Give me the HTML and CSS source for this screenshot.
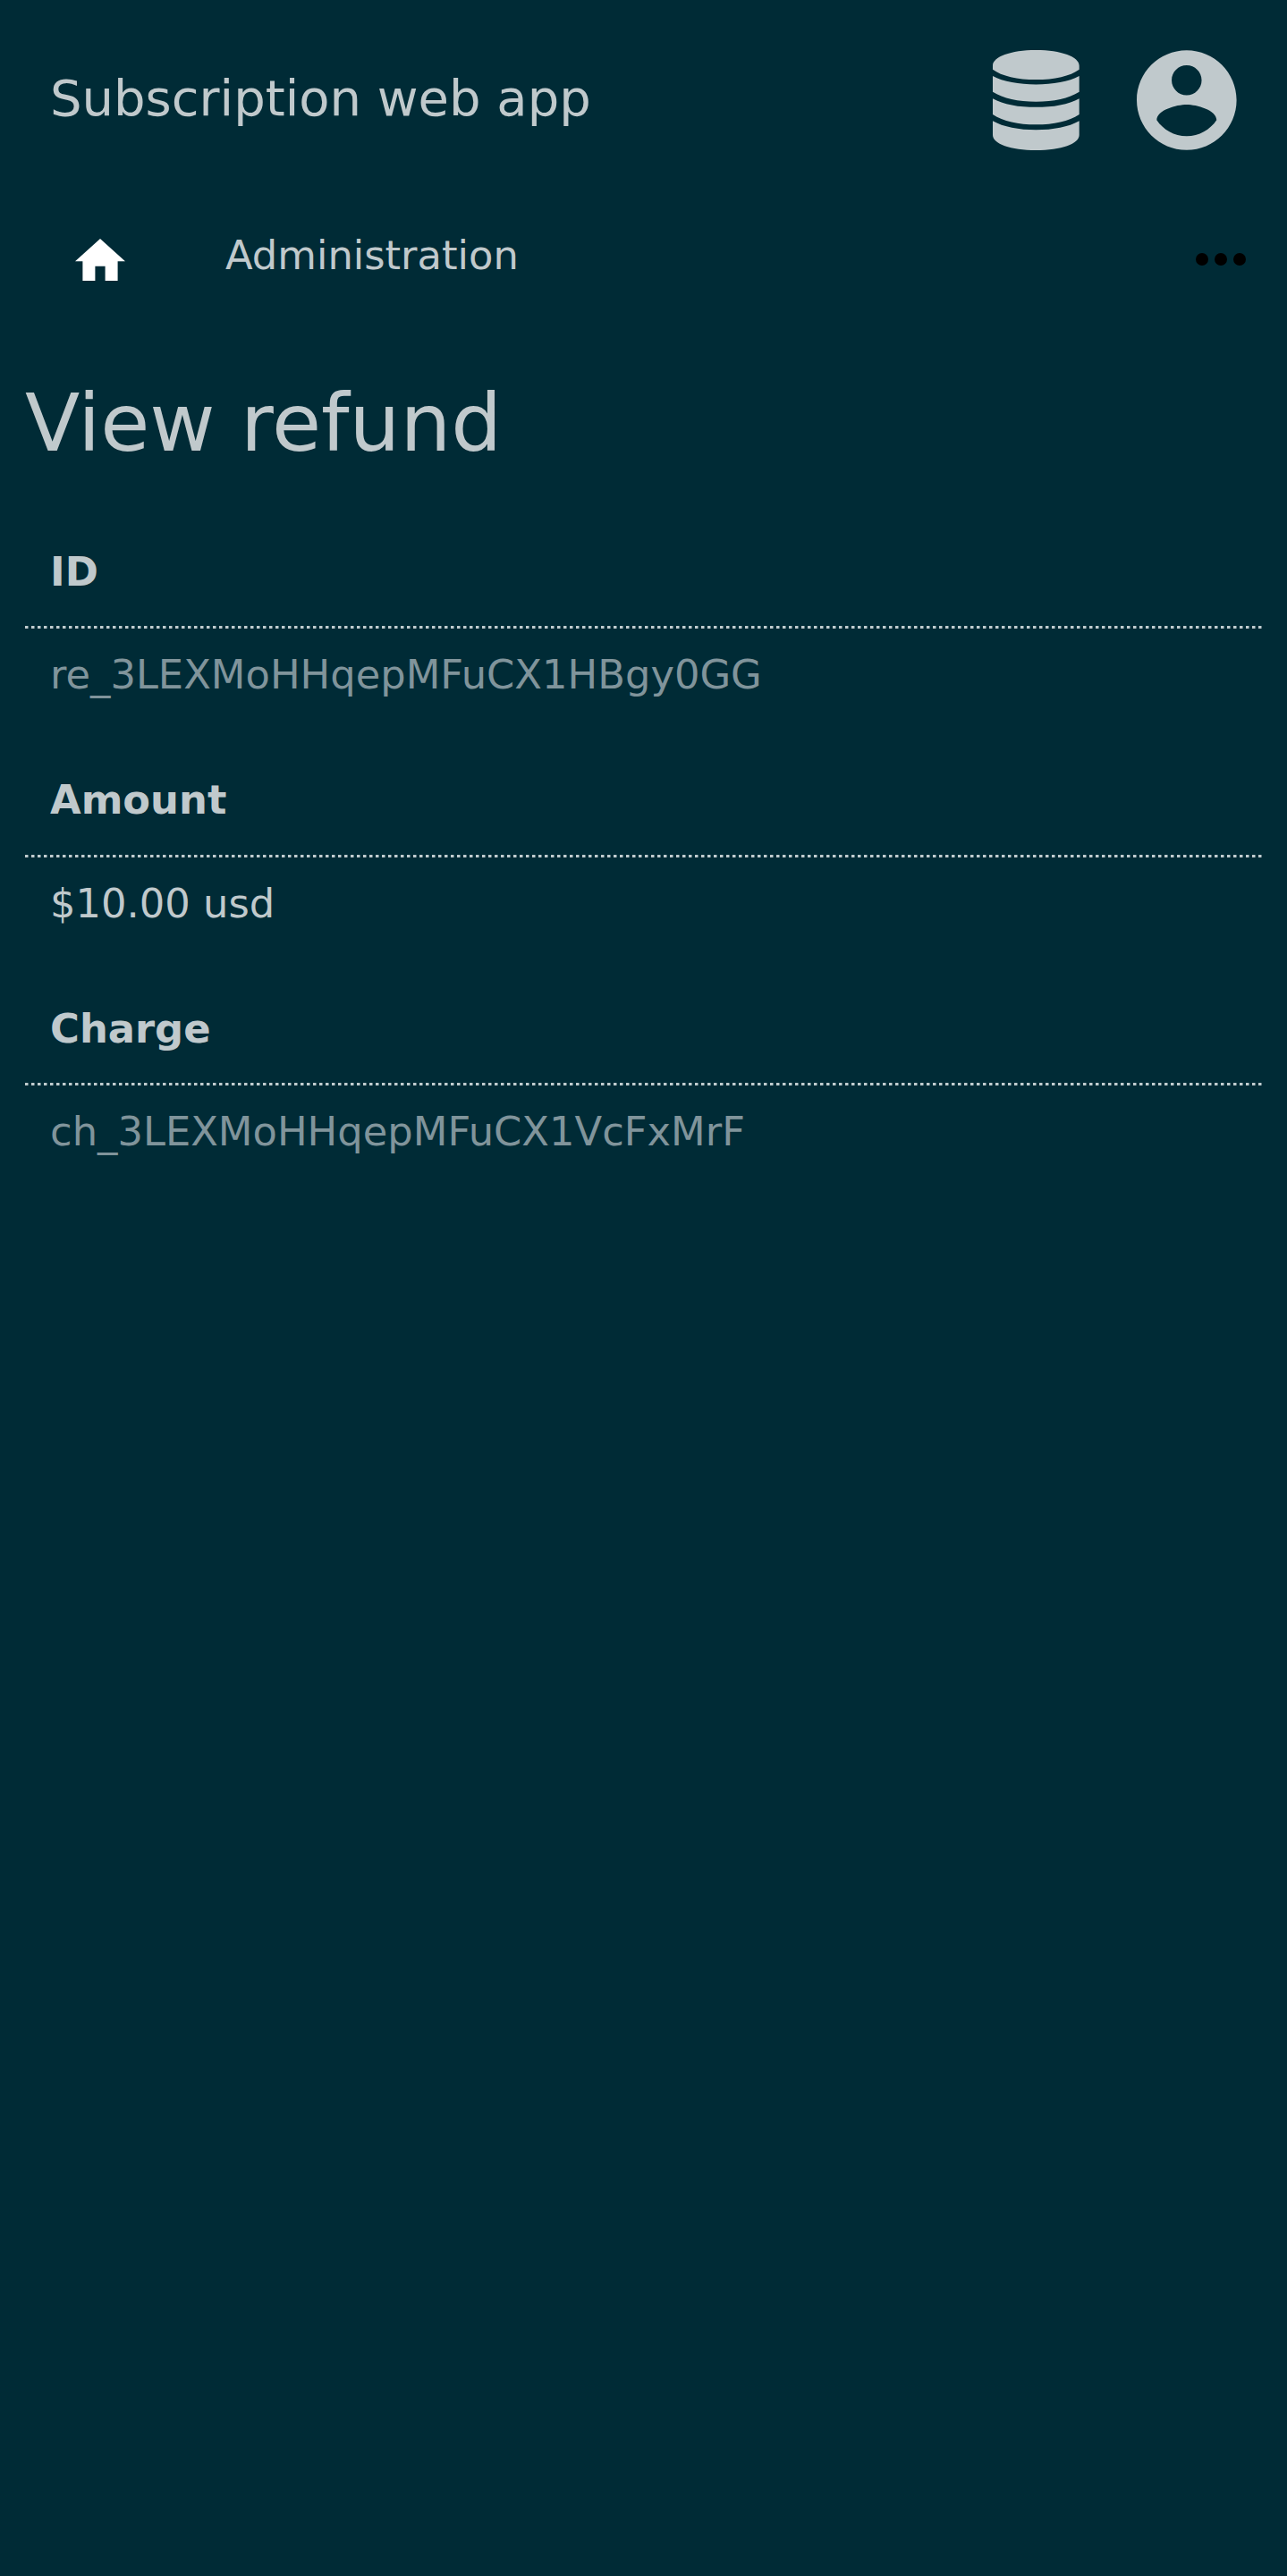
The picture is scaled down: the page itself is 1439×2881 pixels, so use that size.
FILE: index.html
```html
<!DOCTYPE html>
<html lang="en">
<head>
<meta charset="utf-8">
<title>View refund</title>
<link rel="stylesheet" href="styles.css">
</head>
<body>
<header class="header">
  <div class="app-name">Subscription web app</div>
  <div class="menus">
    <svg class="icon-database" viewBox="90 78 290 335" preserveAspectRatio="none"><path d="M90 130C90 101 150 78 235 78S380 101 380 130V143C350 165 297 177 235 177S120 165 90 143zM90 165C125 184 178 193 235 193S345 184 380 165V218C345 240 295 251 235 251S125 240 90 218zM90 240C125 260 178 269 235 269S345 260 380 240V293C345 316 295 327 235 327S125 316 90 293zM90 315C125 335 178 345 235 345S345 335 380 315V362C380 391 320 413 235 413S90 391 90 362z"/></svg>
    <svg class="icon-account" viewBox="2 2 20 20"><path d="M12 2C6.48 2 2 6.48 2 12s4.48 10 10 10 10-4.48 10-10S17.52 2 12 2zm0 3c1.66 0 3 1.34 3 3s-1.34 3-3 3-3-1.34-3-3 1.34-3 3-3zm0 14.2c-2.5 0-4.71-1.28-6-3.22.03-1.99 4-3.08 6-3.08 1.99 0 5.97 1.09 6 3.08-1.29 1.94-3.5 3.22-6 3.22z"/></svg>
  </div>
</header>
<nav class="nav">
  <svg class="icon-home" viewBox="2 3 20 17"><path d="M10 20v-6h4v6h5v-8h3L12 3 2 12h3v8z"/></svg>
  <a class="nav-link">Administration</a>
  <svg class="icon-more" viewBox="0 0 56 14"><circle cx="7" cy="7" r="7"/><circle cx="28" cy="7" r="7"/><circle cx="49" cy="7" r="7"/></svg>
</nav>
<main class="main">
  <h1 class="title">View refund</h1>
  <dl class="details">
    <dt class="term">ID</dt><dd class="value muted">re_3LEXMoHHqepMFuCX1HBgy0GG</dd>
    <dt class="term">Amount</dt><dd class="value">$10.00 usd</dd>
    <dt class="term">Charge</dt><dd class="value muted">ch_3LEXMoHHqepMFuCX1VcFxMrF</dd>
  </dl>
</main>
</body>
</html>
```
FILE: styles.css
```css
body { margin: 0; min-height: 2881px; background: #002b36; color: #c0c9cc; font: 44.8px/56px "DejaVu Sans", sans-serif; }
.header { display: flex; justify-content: space-between; align-items: center; height: 224px; padding: 0 56.5px 0 56px; box-sizing: border-box; }
.app-name { font-size: 56px; padding-bottom: 4px; }
.menus { display: flex; gap: 64px; fill: #c0c9cc; }
.icon-database { width: 96.7px; height: 112px; }
.icon-account { width: 111.6px; height: 112px; }
.nav { display: flex; align-items: center; height: 132px; padding: 0 46px 0 84px; }
.icon-home { width: 56px; height: 47.6px; margin-top: 1px; fill: #fff; }
.nav-link { margin-left: 112px; padding-bottom: 9px; }
.icon-more { width: 56px; height: 14px; margin-left: auto; }
.main { padding: 0 28px; }
.title { margin: 61px 0 55px; font-size: 89.6px; line-height: 112px; font-weight: 400; }
.details { margin: 0; }
.term {
  padding: 28px 28px 35px;
  font-weight: 700;
  background: linear-gradient(90deg, #c0cccf 3px, #607b82 3px 4px, transparent 4px) left bottom / 7px 3px repeat-x;
}
.term:nth-of-type(2) { padding-bottom: 36px; }
.value { margin: 0; padding: 24px 28px 56px; }
.muted { color: #80949b; }
```
